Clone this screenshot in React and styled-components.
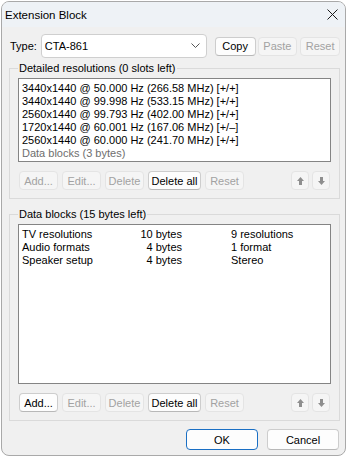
import React from 'react';
import styled, { createGlobalStyle } from 'styled-components';

const FONT = `"Liberation Sans", Arial, sans-serif`;

const Global = createGlobalStyle`
  html, body { margin: 0; padding: 0; background: #ffffff; }
  body { font-family: ${FONT}; font-size: 11px; color: #000; }
  * { box-sizing: border-box; }
`;

const Window = styled.div`
  margin: 1px 0 0 1px;
  width: 345px;
  height: 455px;
  border: 1px solid #a9a9a9;
  border-radius: 8px;
  overflow: hidden;
  background: #f0f0f0;
  display: flex;
  flex-direction: column;
`;

const TitleBar = styled.div`
  height: 25px;
  flex: none;
  background: #eef2f6;
  display: flex;
  align-items: center;
  justify-content: space-between;
  padding: 0 7px 0 3px;
`;

const Title = styled.span`
  font-size: 11.5px;
  line-height: 16px;
`;

const CloseIcon = styled.svg`
  width: 11px;
  height: 11px;
  display: block;
`;

const Body = styled.div`
  padding: 7px 5px 0 7px;
  display: flex;
  flex-direction: column;
`;

const TypeRow = styled.div`
  display: flex;
  align-items: center;
  height: 24px;
`;

const Label = styled.span`
  width: 32px;
  padding-left: 1px;
  line-height: 16px;
`;

const Combo = styled.div`
  width: 167px;
  height: 24px;
  background: #ffffff;
  border: 1px solid #cfcfcf;
  border-radius: 4px;
  display: flex;
  align-items: center;
  justify-content: space-between;
  padding: 0 6px 0 3px;
  margin-right: 8px;
`;

const Chevron = styled.svg`
  width: 9px;
  height: 6px;
  display: block;
`;

const Btn = styled.button`
  font-family: ${FONT};
  font-size: 11px;
  white-space: nowrap;
  height: ${p => p.$h || 19}px;
  width: ${p => p.$w}px;
  margin-right: ${p => p.$mr || 0}px;
  padding: 0;
  border-radius: 4px;
  display: flex;
  align-items: center;
  justify-content: center;
  line-height: 16px;
  background: ${p => (p.disabled ? '#f5f5f5' : '#fdfdfd')};
  color: ${p => (p.disabled ? '#a2a2a2' : '#000')};
  border: 1px solid ${p => (p.$primary ? '#1a6fc4' : p.disabled ? '#e4e4e4' : '#cdcdcd')};
  border-bottom-color: ${p => (p.$primary ? '#1a6fc4' : p.disabled ? '#e4e4e4' : '#b8b8b8')};
`;

const Group = styled.fieldset`
  margin: ${p => p.$mt}px 0 0 0;
  padding: 2px 8px 8px 8px;
  width: 331px;
  border: 1px solid #dadada;
  border-radius: 0;
  min-width: 0;
`;

const Legend = styled.legend`
  padding: 0 1px;
  line-height: 16px;
  font-size: 11px;
`;

const List = styled.div`
  height: ${p => p.$h}px;
  background: #ffffff;
  border: 1px solid #848484;
  padding: 3px 3px 0 3px;
  overflow: hidden;
`;

const Row = styled.div`
  line-height: 13px;
  height: 13px;
  white-space: nowrap;
  color: ${p => (p.$dim ? '#6e6e6e' : '#000')};
`;

const BlockRow = styled.div`
  display: grid;
  grid-template-columns: 110px 50px 1fr;
  line-height: 13px;
  height: 13px;
  white-space: nowrap;
`;

const Bytes = styled.span`
  text-align: right;
`;

const Desc = styled.span`
  padding-left: 49px;
`;

const ButtonRow = styled.div`
  display: flex;
  align-items: center;
  margin: 9px 0 0 1px;
`;

const Spacer = styled.div`
  flex: 1;
`;

const ArrowIcon = styled.svg`
  width: 7px;
  height: 8px;
  display: block;
  transform: ${p => (p.$down ? 'rotate(180deg)' : 'none')};
`;

const Footer = styled.div`
  display: flex;
  justify-content: flex-end;
  margin-top: 8px;
  padding-right: 1px;
`;

const Arrow = ({ down }) => (
  <ArrowIcon $down={down} viewBox="0 0 7 8">
    <path d="M3.5 0 L7 4 L5 4 L5 8 L2 8 L2 4 L0 4 Z" fill="#8e8e8e" />
  </ArrowIcon>
);

const resolutions = [
  '3440x1440 @ 50.000 Hz (266.58 MHz) [+/+]',
  '3440x1440 @ 99.998 Hz (533.15 MHz) [+/+]',
  '2560x1440 @ 99.793 Hz (402.00 MHz) [+/+]',
  '1720x1440 @ 60.001 Hz (167.06 MHz) [+/\u2013]',
  '2560x1440 @ 60.000 Hz (241.70 MHz) [+/+]',
];

const blocks = [
  ['TV resolutions', '10 bytes', '9 resolutions'],
  ['Audio formats', '4 bytes', '1 format'],
  ['Speaker setup', '4 bytes', 'Stereo'],
];

const ActionButtons = ({ addEnabled }) => (
  <ButtonRow>
    <Btn $w={39} $mr={4} disabled={!addEnabled}>Add...</Btn>
    <Btn $w={39} $mr={4} disabled>Edit...</Btn>
    <Btn $w={39} $mr={4} disabled>Delete</Btn>
    <Btn $w={53} $mr={4}>Delete all</Btn>
    <Btn $w={39} disabled>Reset</Btn>
    <Spacer />
    <Btn $w={18} $mr={3} disabled><Arrow /></Btn>
    <Btn $w={18} $mr={1} disabled><Arrow down /></Btn>
  </ButtonRow>
);

export default function App() {
  return (
    <>
      <Global />
      <Window>
        <TitleBar>
          <Title>Extension Block</Title>
          <CloseIcon viewBox="0 0 11 11">
            <path d="M0.5 0.5 L10.5 10.5 M10.5 0.5 L0.5 10.5" stroke="#1b1b1b" strokeWidth="1" />
          </CloseIcon>
        </TitleBar>
        <Body>
          <TypeRow>
            <Label>Type:</Label>
            <Combo>
              <span>CTA-861</span>
              <Chevron viewBox="0 0 9 6">
                <path d="M0.5 0.5 L4.5 4.5 L8.5 0.5" stroke="#555" strokeWidth="1" fill="none" />
              </Chevron>
            </Combo>
            <Btn $w={41} $mr={2}>Copy</Btn>
            <Btn $w={40} $mr={3} disabled>Paste</Btn>
            <Btn $w={40} disabled>Reset</Btn>
          </TypeRow>
          <Group $mt={2}>
            <Legend>Detailed resolutions (0 slots left)</Legend>
            <List $h={84}>
              {resolutions.map(r => (
                <Row key={r}>{r}</Row>
              ))}
              <Row $dim>Data blocks (3 bytes)</Row>
            </List>
            <ActionButtons addEnabled={false} />
          </Group>
          <Group $mt={7}>
            <Legend>Data blocks (15 bytes left)</Legend>
            <List $h={160}>
              {blocks.map(b => (
                <BlockRow key={b[0]}>
                  <span>{b[0]}</span>
                  <Bytes>{b[1]}</Bytes>
                  <Desc>{b[2]}</Desc>
                </BlockRow>
              ))}
            </List>
            <ActionButtons addEnabled />
          </Group>
          <Footer>
            <Btn $w={72} $h={21} $mr={9} $primary>OK</Btn>
            <Btn $w={72} $h={21}>Cancel</Btn>
          </Footer>
        </Body>
      </Window>
    </>
  );
}
